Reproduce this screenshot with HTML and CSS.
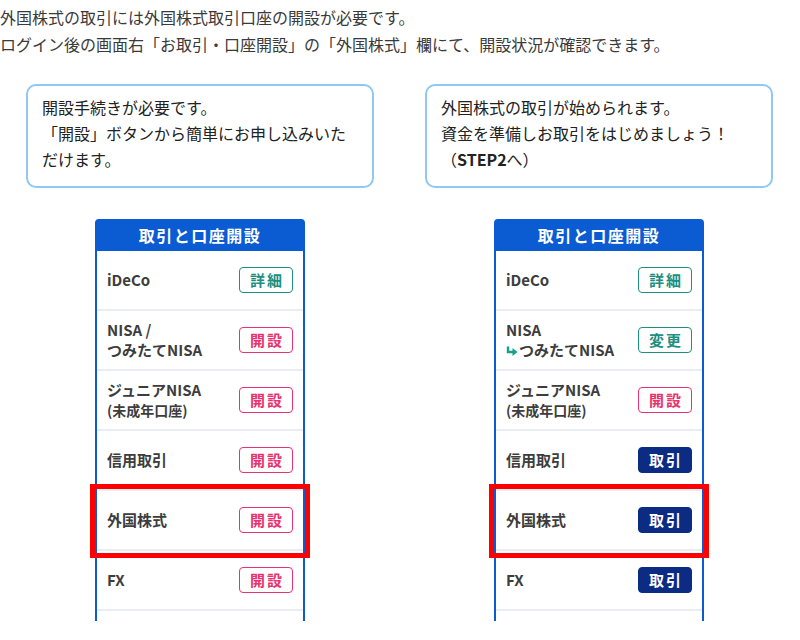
FILE: index.html
```html
<!DOCTYPE html>
<html lang="ja">
<head>
    <meta charset="UTF-8">
    <meta name="viewport" content="width=device-width, initial-scale=1.0">
    <title>外国株式の取引口座</title>
    <link rel="stylesheet" href="styles.css">
</head>
<body>
    <p class="intro">
        外国株式の取引には外国株式取引口座の開設が必要です。<br>
        ログイン後の画面右「お取引・口座開設」の「外国株式」欄にて、開設状況が確認できます。
    </p>

    <div class="columns">
        <!-- 未開設の場合 -->
        <section class="column">
            <div class="callout">
                開設手続きが必要です。<br>
                「開設」ボタンから簡単にお申し込みいただけます。
            </div>

            <div class="panel-wrap">
                <div class="panel">
                    <h2 class="panel-title">取引と口座開設</h2>
                    <div class="panel-row">
                        <span class="row-label">iDeCo</span>
                        <a class="row-btn btn-detail">詳細</a>
                    </div>
                    <div class="panel-row">
                        <span class="row-label">NISA /<br>つみたてNISA</span>
                        <a class="row-btn btn-open">開設</a>
                    </div>
                    <div class="panel-row">
                        <span class="row-label">ジュニアNISA<br><small>(未成年口座)</small></span>
                        <a class="row-btn btn-open">開設</a>
                    </div>
                    <div class="panel-row">
                        <span class="row-label">信用取引</span>
                        <a class="row-btn btn-open">開設</a>
                    </div>
                    <div class="panel-row is-marked">
                        <span class="row-label">外国株式</span>
                        <a class="row-btn btn-open">開設</a>
                    </div>
                    <div class="panel-row">
                        <span class="row-label">FX</span>
                        <a class="row-btn btn-open">開設</a>
                    </div>
                    <div class="panel-row"></div>
                </div>
            </div>
        </section>

        <!-- 開設済みの場合 -->
        <section class="column">
            <div class="callout">
                外国株式の取引が始められます。<br>
                資金を準備しお取引をはじめましょう！<br>
                （<strong>STEP2</strong>へ）
            </div>

            <div class="panel-wrap">
                <div class="panel">
                    <h2 class="panel-title">取引と口座開設</h2>
                    <div class="panel-row">
                        <span class="row-label">iDeCo</span>
                        <a class="row-btn btn-detail">詳細</a>
                    </div>
                    <div class="panel-row">
                        <span class="row-label">NISA<br><svg class="arrow-icon" width="12" height="10" viewBox="0 0 12 10"><path d="M2 0.5 V6 H7" fill="none" stroke="currentColor" stroke-width="2.4"/><polygon points="6.5,2 11.5,6 6.5,10" fill="currentColor"/></svg>つみたてNISA</span>
                        <a class="row-btn btn-detail">変更</a>
                    </div>
                    <div class="panel-row">
                        <span class="row-label">ジュニアNISA<br><small>(未成年口座)</small></span>
                        <a class="row-btn btn-open">開設</a>
                    </div>
                    <div class="panel-row">
                        <span class="row-label">信用取引</span>
                        <a class="row-btn btn-trade">取引</a>
                    </div>
                    <div class="panel-row is-marked">
                        <span class="row-label">外国株式</span>
                        <a class="row-btn btn-trade">取引</a>
                    </div>
                    <div class="panel-row">
                        <span class="row-label">FX</span>
                        <a class="row-btn btn-trade">取引</a>
                    </div>
                    <div class="panel-row"></div>
                </div>
            </div>
        </section>
    </div>
</body>
</html>
```

FILE: styles.css
```css
:root {
    --text-color: #333333;
    --callout-border: #8fc7f7;
    --panel-blue: #0b5bd3;
    --row-line: #eaedf3;
    --teal: #1d8f82;
    --pink: #e8336d;
    --navy: #0c2b82;
}

body {
    font-family: "Noto Sans CJK JP", "Noto Sans", sans-serif;
    color: var(--text-color);
    margin: 0;
    background-color: #ffffff;
}

.intro {
    margin: 0;
    padding: 4px 0 0 0;
    font-size: 16px;
    line-height: 27px;
    color: #3a3a3a;
}

.columns {
    display: flex;
    gap: 51px;
    padding-left: 26px;
    margin-top: 26px;
}

.column {
    width: 348px;
}

.callout {
    border: 2px solid var(--callout-border);
    border-radius: 10px;
    padding: 8px 20px 14px 14px;
    font-size: 16px;
    line-height: 26px;
    color: #222222;
}

.callout strong {
    font-weight: bold;
}

.panel-wrap {
    margin-top: 31px;
    height: 402px;
    overflow: hidden;
}

.panel {
    width: 206px;
    margin: 0 auto;
    border: 2px solid var(--panel-blue);
    border-radius: 4px 4px 0 0;
    background: #ffffff;
}

.panel-title {
    margin: 0;
    height: 30px;
    line-height: 29px;
    background-color: var(--panel-blue);
    color: #ffffff;
    font-size: 16px;
    font-weight: bold;
    letter-spacing: 1.5px;
    text-align: center;
}

.panel-row {
    display: flex;
    align-items: center;
    justify-content: space-between;
    height: 58px;
    padding: 0 10px;
    border-bottom: 2px solid var(--row-line);
}

.panel-row.is-marked {
    outline: 5px solid #ff0000;
    outline-offset: 2px;
}

.row-label {
    font-size: 15px;
    line-height: 20px;
    font-weight: bold;
    color: #3d3d3d;
}

.row-label small {
    font-size: 14px;
}

.arrow-icon {
    color: #17a08c;
    margin-right: 1px;
    vertical-align: 0;
}

.row-btn {
    box-sizing: border-box;
    width: 54px;
    height: 26px;
    padding-left: 2px;
    border-radius: 4px;
    font-size: 15px;
    font-weight: bold;
    line-height: 23px;
    text-align: center;
    letter-spacing: 2px;
    cursor: pointer;
}

.btn-detail {
    border: 1.5px solid var(--teal);
    color: var(--teal);
}

.btn-open {
    border: 1.5px solid var(--pink);
    color: var(--pink);
}

.btn-trade {
    background-color: var(--navy);
    border: 1.5px solid var(--navy);
    color: #ffffff;
}
```
